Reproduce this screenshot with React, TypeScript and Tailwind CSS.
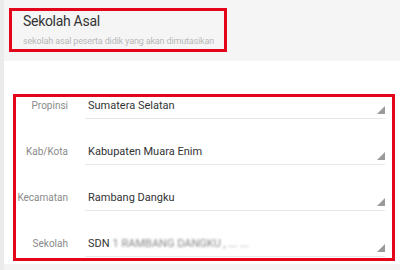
import React from "react";

const rows = [
  { label: "Propinsi", value: "Sumatera Selatan" },
  { label: "Kab/Kota", value: "Kabupaten Muara Enim" },
  { label: "Kecamatan", value: "Rambang Dangku" },
  { label: "Sekolah", value: "SDN" },
];

function Arrow() {
  return (
    <svg className="ml-auto mt-[7px] shrink-0" width="8" height="8" viewBox="0 0 8 8">
      <polygon points="8,0 8,8 0,8" fill="#9a9a9a" />
    </svg>
  );
}

export default function App() {
  return (
    <div
      className="w-[400px] h-[270px] flex bg-white overflow-hidden"
      style={{ fontFamily: "Roboto, 'Liberation Sans', sans-serif" }}
    >
      <div className="w-[4px] bg-[#ebebeb] shrink-0" />
      <div className="flex-1 flex flex-col">
        <div className="h-[61px] bg-[#f5f5f5] pl-[5px] pt-[8px] shrink-0">
          <div className="w-[218px] h-[44px] border-[3px] border-[#e3051b] pl-[11px] pt-[2px]">
            <div className="text-[14px] leading-[16px] tracking-[-0.3px] text-[#333]">Sekolah Asal</div>
            <div className="mt-[6px] text-[9px] leading-[12px] tracking-[-0.15px] text-[#b8b8b8]">
              sekolah asal peserta didik yang akan dimutasikan
            </div>
          </div>
        </div>
        <div className="ml-[9px] mt-[33px] w-[382px] border-[3px] border-[#e3051b] pb-[1px]">
          {rows.map((r, i) => (
            <div
              key={r.label}
              className={`flex items-start ${i === 0 ? "mt-[2px]" : "mt-[26px]"}`}
            >
              <div className="w-[52px] text-right text-[10px] leading-[14px] text-[#8a8a8a] shrink-0 whitespace-nowrap">
                {r.label}
              </div>
              <div className="ml-[17px] mr-[7px] flex-1 flex h-[20px] border-b border-[#e8e8e8] pl-[3px]">
                <span className="text-[11px] leading-[14px] text-[#333] whitespace-nowrap">
                  {r.value}
                  {i === 3 && (
                    <span className="ml-[3px] text-[#888] blur-[1px]">1 RAMBANG DANGKU , ... ...</span>
                  )}
                </span>
                <Arrow />
              </div>
            </div>
          ))}
        </div>
        <div className="flex-1 bg-[#f3f3f3] mt-[3px]" />
      </div>
    </div>
  );
}
